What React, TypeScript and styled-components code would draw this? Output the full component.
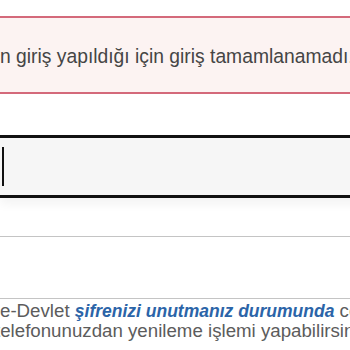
import * as React from "react";
import styled, { createGlobalStyle } from "styled-components";

const GlobalStyle = createGlobalStyle`
    html, body {
        margin: 0;
        padding: 0;
        background: #fff;
        overflow: hidden;
    }
    body {
        font-family: "Liberation Sans", Arial, sans-serif;
    }
    * {
        box-sizing: border-box;
    }
`;

const Page = styled.div`
    width: 350px;
    height: 350px;
    overflow: hidden;
    display: flex;
    flex-direction: column;
`;

const Alert = styled.div`
    margin: 16px -20px 0 -20px;
    height: 78px;
    border: 2px solid #d4697a;
    background: #fcf3f2;
    display: flex;
    align-items: center;
    padding: 3px 0 0 18px;
    color: #454545;
    font-size: 19.3px;
    white-space: nowrap;
`;

const InputBox = styled.div`
    margin: 41px -20px 0 0;
    height: 63px;
    border-top: 3px solid #111;
    border-bottom: 3px solid #111;
    background: #f6f6f6;
    display: flex;
    align-items: center;
    padding-left: 2px;
    box-shadow: 0 6px 10px rgba(0, 0, 0, 0.05);
`;

const Caret = styled.span`
    width: 2px;
    height: 39px;
    background: #111;
`;

const Divider = styled.div<{ $gap: number }>`
    margin-top: ${(p) => p.$gap}px;
    height: 1px;
    background: #c4c4c4;
`;

const Info = styled.p`
    margin: 2px 0 0 -5px;
    text-indent: 5px;
    font-size: 18.7px;
    line-height: 20px;
    color: #5c5c5c;
    white-space: nowrap;
`;

const Link = styled.a`
    color: #2b64a8;
    font-size: 17.5px;
    font-weight: bold;
    font-style: italic;
    text-decoration: none;
`;

export default function App() {
    return (
        <Page>
            <GlobalStyle />
            <Alert>n giriş yapıldığı için giriş tamamlanamadı.</Alert>
            <InputBox>
                <Caret />
            </InputBox>
            <Divider $gap={38} />
            <Divider $gap={61} />
            <Info>
                e-Devlet <Link href="#">şifrenizi unutmanız durumunda</Link> cep
                <br />
                telefonunuzdan yenileme işlemi yapabilirsiniz.
            </Info>
        </Page>
    );
}
